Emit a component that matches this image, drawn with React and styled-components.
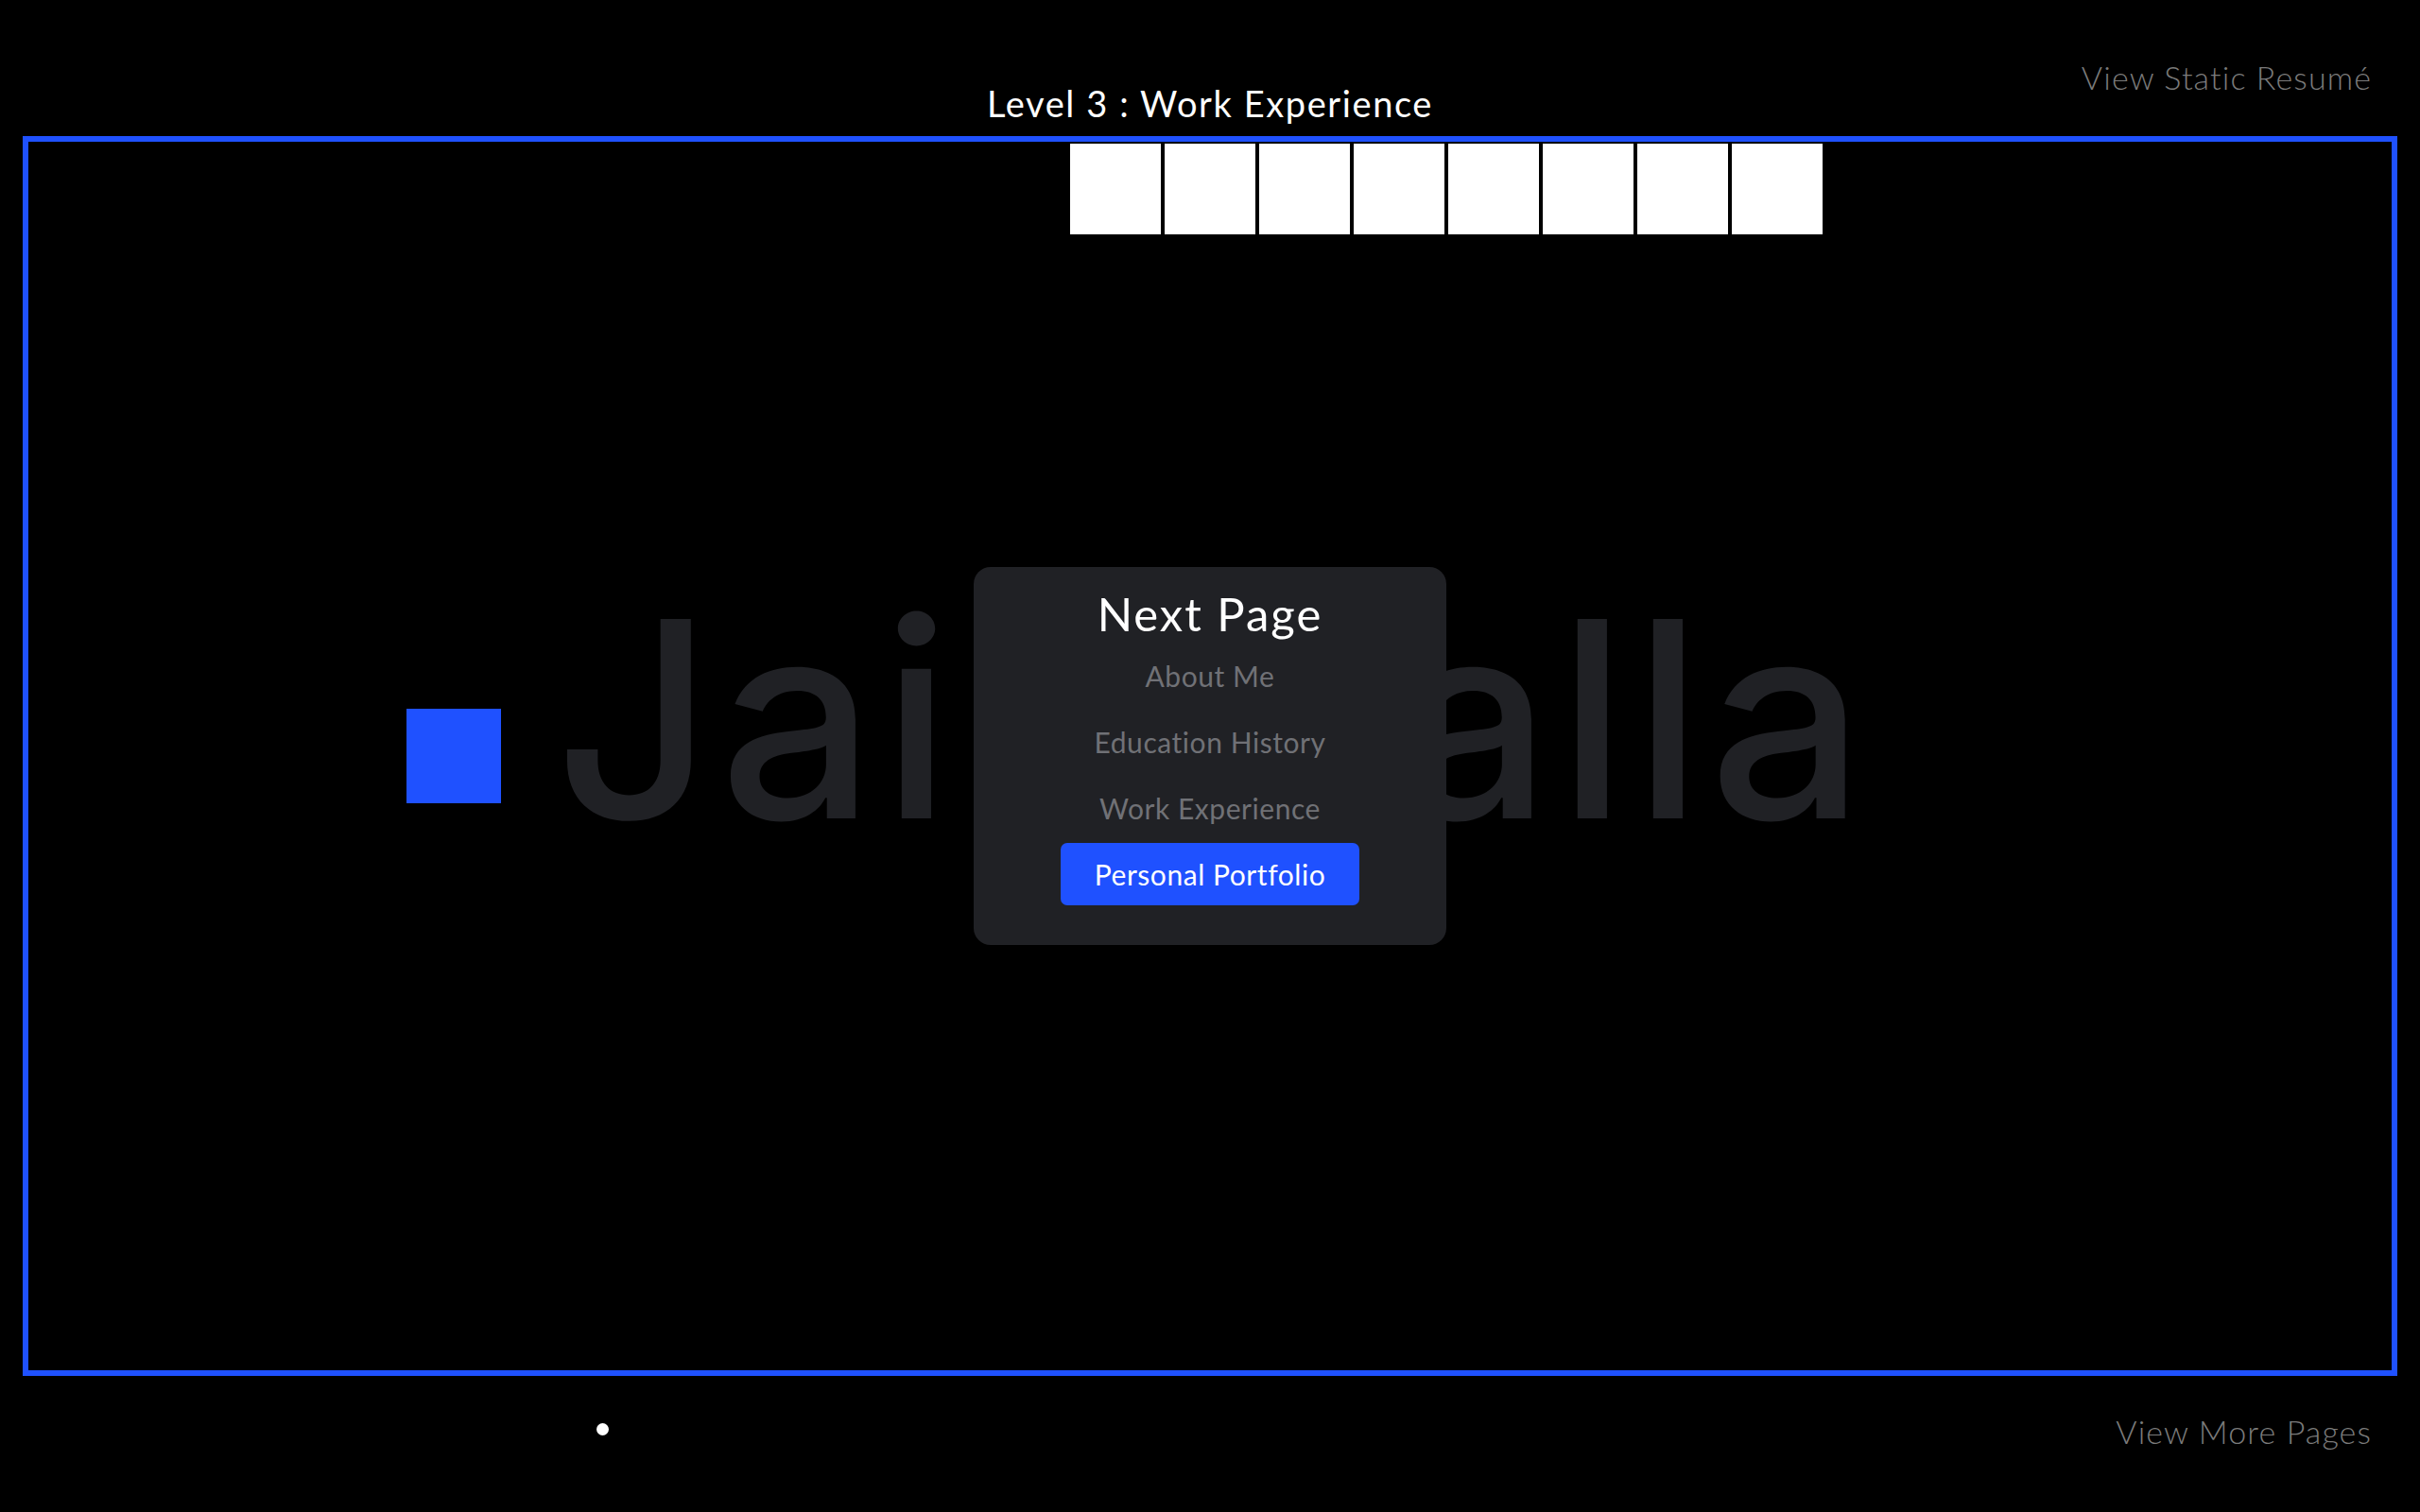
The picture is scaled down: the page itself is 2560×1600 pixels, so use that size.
import React from "react";
import styled, { createGlobalStyle } from "styled-components";

const Global = createGlobalStyle`
  html, body { margin: 0; padding: 0; background: #000; }
  body { font-family: Lato, "Open Sans", sans-serif; color: #fff; }
`;

const Page = styled.div`
  width: 2560px;
  height: 1600px;
  background: #000;
  display: flex;
  flex-direction: column;
  overflow: hidden;
`;

const Header = styled.header`
  height: 144px;
  display: grid;
  grid-template-columns: 1fr auto 1fr;
  align-items: start;
`;

const Title = styled.h1`
  grid-column: 2;
  margin: 0;
  padding-top: 86px;
  font-size: 38px;
  line-height: 46px;
  font-weight: 400;
  letter-spacing: 1.6px;
  color: #fff;
  white-space: nowrap;
`;

const SideLink = styled.a`
  justify-self: end;
  margin-right: 51px;
  padding-top: ${(p) => p.$top}px;
  font-size: 34px;
  line-height: 41px;
  font-weight: 300;
  letter-spacing: 1.1px;
  color: #7b7b7b;
  text-decoration: none;
  white-space: nowrap;
`;

const Board = styled.main`
  margin: 0 24px;
  border: 6px solid #1f51ff;
  display: grid;
  grid-template-columns: repeat(25, 100px);
  grid-template-rows: repeat(13, 100px);
`;

const Name = styled.div`
  grid-column: 1 / -1;
  grid-row: 1 / -1;
  justify-self: center;
  align-self: start;
  margin-top: 466px;
  padding-left: 7px;
  font-family: Inter, "Noto Sans", sans-serif;
  font-weight: 500;
  font-size: 290px;
  line-height: 1;
  letter-spacing: 7px;
  color: #202125;
  white-space: nowrap;
`;

const Tile = styled.div`
  grid-column: ${(p) => p.$col};
  grid-row: ${(p) => p.$row};
  margin: 2px;
  background: #fff;
`;

const Player = styled.div`
  grid-column: ${(p) => p.$col};
  grid-row: ${(p) => p.$row};
  background: #1f51ff;
`;

const Footer = styled.footer`
  flex: 1;
  display: flex;
  justify-content: space-between;
  align-items: flex-start;
`;

const Ball = styled.span`
  width: 13px;
  height: 13px;
  border-radius: 50%;
  background: #fff;
  margin: 50px 0 0 631px;
`;

const Overlay = styled.div`
  position: fixed;
  inset: 0;
  display: flex;
  align-items: center;
  justify-content: center;
`;

const Dialog = styled.div`
  width: 500px;
  height: 400px;
  box-sizing: border-box;
  background: #202125;
  border-radius: 18px;
  padding: 20px 0 41px;
  display: flex;
  flex-direction: column;
  align-items: center;
  gap: 4px;
`;

const DialogTitle = styled.h2`
  margin: 0;
  font-size: 49px;
  line-height: 58px;
  font-weight: 400;
  letter-spacing: 2px;
  color: #fff;
`;

const NavButton = styled.button`
  font-family: inherit;
  font-size: 30px;
  line-height: 36px;
  font-weight: 400;
  letter-spacing: 0.55px;
  padding: 15px 36px;
  border: 0;
  border-radius: 7px;
  background: ${(p) => (p.$active ? "#1f51ff" : "transparent")};
  color: ${(p) => (p.$active ? "#fff" : "#707176")};
  cursor: pointer;
`;

const tiles = [12, 13, 14, 15, 16, 17, 18, 19];
const pages = ["About Me", "Education History", "Work Experience", "Personal Portfolio"];

export default function App() {
  return (
    <>
      <Global />
      <Page>
        <Header>
          <Title>Level 3 : Work Experience</Title>
          <SideLink $top={61} href="#">View Static Resumé</SideLink>
        </Header>
        <Board>
          <Name>Jai Bhalla</Name>
          {tiles.map((c) => (
            <Tile key={c} $col={c} $row={1} />
          ))}
          <Player $col={5} $row={7} />
        </Board>
        <Footer>
          <Ball />
          <SideLink $top={38} href="#">View More Pages</SideLink>
        </Footer>
        <Overlay>
          <Dialog>
            <DialogTitle>Next Page</DialogTitle>
            {pages.map((p, i) => (
              <NavButton key={p} $active={i === 3}>{p}</NavButton>
            ))}
          </Dialog>
        </Overlay>
      </Page>
    </>
  );
}
